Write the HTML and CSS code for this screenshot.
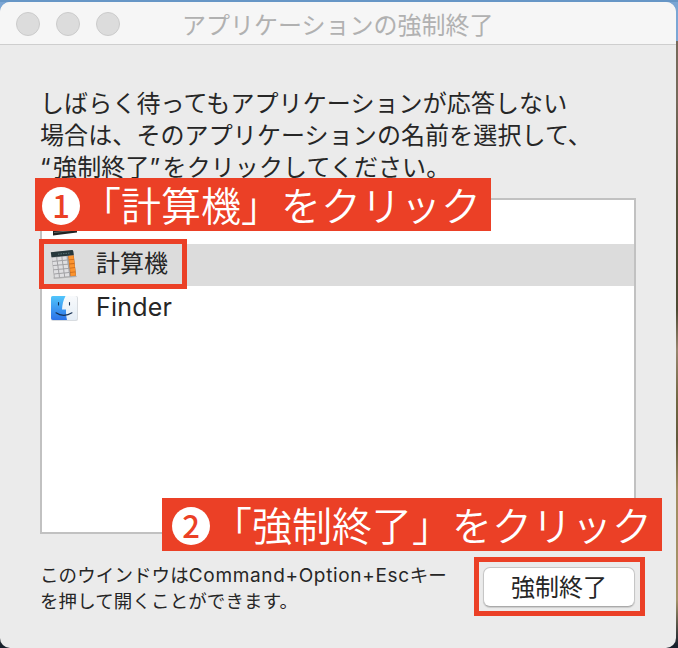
FILE: index.html
```html
<!DOCTYPE html>
<html lang="ja">
<head>
<meta charset="utf-8">
<title>アプリケーションの強制終了</title>
<link rel="stylesheet" href="styles.css">
</head>
<body>
<div class="window">
  <header class="titlebar">
    <div class="lights"><i class="light"></i><i class="light"></i><i class="light"></i></div>
    <h1 class="title">アプリケーションの強制終了</h1>
  </header>
  <main class="content">
    <p class="message">しばらく待ってもアプリケーションが応答しない<br>場合は、そのアプリケーションの名前を選択して、<br><span class="quote">“</span>強制終了<span class="quote">”</span>をクリックしてください。</p>
    <ul class="apps">
      <li class="app app-first">
        <svg class="icon" viewBox="0 0 28 28"><path d="M1 5 25 3V23.500L1 26.500Z" fill="#222"/><path d="M2 23.500 24 21" stroke="#666" stroke-width="1"/></svg>
      </li>
      <li class="app app-selected">
        <svg class="icon icon-calc" viewBox="0 0 28 28">
          <path d="M3 27.500 26 25.500 27 27 4 29Z" fill="#b4b4b4"/>
          <path d="M1.200 2.200 22 .2q1-.1 1.200.9L26 25q.1 1-.9 1.200L5 28q-1 .1-1.100-.9Z" fill="#a2a2a5"/>
          <path d="M.8 2.300 22 .1q1 0 1.200.9L23.800 5.200 1.500 7.200Z" fill="#26373b"/>
          <path d="m8 4.200 12-1.200" stroke="#5c7678" stroke-dasharray="1.500 1"/>
          <path d="m18.200 6 5.600-.6L26 25.600l-5.500.6Z" fill="#c9691a"/>
          <g stroke="#dfdfe1" stroke-width="3.200" stroke-dasharray="4.200 1" fill="none"><path d="m2.200 9.300 15.600-1.500M2.800 13.500l15.600-1.500M3.400 17.700l15.600-1.500M4 21.900l15.600-1.500M4.600 26l15.500-1.500"/></g>
          <g stroke="#fb942f" stroke-width="3.400" fill="none"><path d="m18.700 7.700 4.900-.5M19.200 11.900l4.900-.5M19.700 16.100l4.900-.5M20.200 20.300l4.900-.5M20.700 24.400l4.900-.5"/></g>
        </svg>
        <span class="name">計算機</span>
      </li>
      <li class="app">
        <svg class="icon" viewBox="0 0 28 28">
          <defs>
            <linearGradient id="blue" x2="0" y2="1"><stop stop-color="#51c5fb"/><stop offset="1" stop-color="#2c72e8"/></linearGradient>
            <linearGradient id="white" x2="0" y2="1"><stop stop-color="#f8fafc"/><stop offset="1" stop-color="#e4edf6"/></linearGradient>
          </defs>
          <rect x="1" y="2" width="27" height="25" rx="2" fill="#d8dce0"/>
          <rect x="1" y="2" width="26" height="24" rx="1.800" fill="url(#white)"/>
          <path d="M2.800 2H15.500C13.200 6.500 12.300 10.500 12 15.500h4c-.1 4 .2 7 1 10.500H2.800Q1 26 1 24.200V3.800Q1 2 2.800 2Z" fill="url(#blue)"/>
          <path d="M8.500 8.500v2.500M19.500 8.500v2.500M6 18.800c4.500 3.400 11 3.400 16 0" fill="none" stroke="#183255" stroke-width="1.100" stroke-linecap="round"/>
        </svg>
        <span class="name latin">Finder</span>
      </li>
    </ul>
    <footer class="footer">
      <p class="hint">このウインドウは<span class="keys">Command+Option+Esc</span>キー<br>を押して開くことができます。</p>
      <button class="quit">強制終了</button>
    </footer>
  </main>
</div>
<div class="outline outline-app"></div>
<div class="outline outline-quit"></div>
<div class="callout callout-one"><span class="num">1</span>「計算機」をクリック</div>
<div class="callout callout-two"><span class="num">2</span>「強制終了」をクリック</div>
</body>
</html>
```
FILE: styles.css
```css
* { box-sizing: border-box; margin: 0; padding: 0; }
body {
  width: 678px; height: 648px; overflow: hidden; position: relative; padding-top: 2px;
  font-family: "Noto Sans CJK JP", sans-serif; color: #262626;
  background: linear-gradient(#6696c6 0 2px, #7ba6d4 2px 41px, #75695a 41px 100px, #554e38 200px, #4d4933 310px, #97866f 350px, #716642 400px, #62583b 440px, #a18c61 490px, #a49369 600px, #17202c 645px);
}
.window {
  width: 676px; height: 646px; border-radius: 10px; overflow: hidden;
  background: #ebebeb; display: flex; flex-direction: column;
}
.titlebar {
  height: 43px; flex: none; background: #f6f6f6; border-bottom: 1px solid #cecece;
  display: grid; grid-template-columns: 120px 1fr 120px; align-items: center; padding: 2px 0 0 16px;
}
.lights { display: flex; gap: 16px; }
.light { width: 24px; height: 24px; border-radius: 50%; background: #dcdcdc; border: 1px solid #cbcbcb; }
.title { grid-column: 2; font-size: 24px; font-weight: 400; line-height: 38px; color: #b1b1b1; white-space: nowrap; margin-left: 46px; }
.content { padding: 41px 40px 0 40px; flex: 1; }
.message { font-size: 24px; letter-spacing: .1px; line-height: 32px; white-space: nowrap; height: 112px; }
.quote { font-family: Inter, sans-serif; letter-spacing: 2.5px; }
.apps { list-style: none; height: 336px; border: 2px solid #c1c1c1; background: #fff; overflow: hidden; }
.app { height: 43px; display: flex; align-items: center; padding-left: 8px; gap: 18px; }
.app-first { height: 44px; padding-left: 10px; padding-top: 1px; }
.app-selected { height: 42px; background: #dcdcdc; }
.icon { width: 28px; height: 28px; flex: none; overflow: visible; }
.icon-calc { position: relative; top: -1px; }
.name { font-size: 24px; line-height: 36px; padding-bottom: 6px; }
.latin { font-family: Inter, sans-serif; font-size: 25px; letter-spacing: .2px; padding-bottom: 2px; }
.footer { display: flex; justify-content: space-between; padding-top: 27px; }
.hint { font-size: 18.5px; letter-spacing: .1px; line-height: 26px; white-space: nowrap; }
.keys { font-family: Inter, sans-serif; font-size: 19px; letter-spacing: .65px; line-height: 20px; }
.quit {
  width: 152px; height: 40px; margin-top: 6px; border: 1px solid #c6c6c6; border-bottom-color: #aaa; border-radius: 7px;
  background: #fff; box-shadow: 0 1px 1px #0002; color: #262626; font: 24px/34px "Noto Sans CJK JP", sans-serif;
  position: relative; left: -1px; padding-bottom: 3px;
}
.outline { position: absolute; border: 5px solid #eb4026; }
.outline-app { left: 39px; top: 239px; width: 148px; height: 50px; }
.outline-quit { left: 474px; top: 557px; width: 171px; height: 59px; }
.callout {
  position: absolute; height: 53px; background: #eb4026; color: #fff; font-size: 40px; font-weight: 350; line-height: 53px;
  white-space: nowrap; display: flex; align-items: center; padding-left: 6px;
}
.callout-one { left: 35px; top: 178px; width: 456px; }
.callout-two { left: 162px; top: 498px; width: 500px; padding-left: 10px; }
.num {
  width: 38px; height: 38px; margin: 2px 1px 0; border-radius: 50%; background: #fff; color: #eb4026;
  font-size: 31px; font-weight: 500; line-height: 35px; text-align: center;
}
.callout-two .num { margin-left: 0; margin-right: 2px; }
```
